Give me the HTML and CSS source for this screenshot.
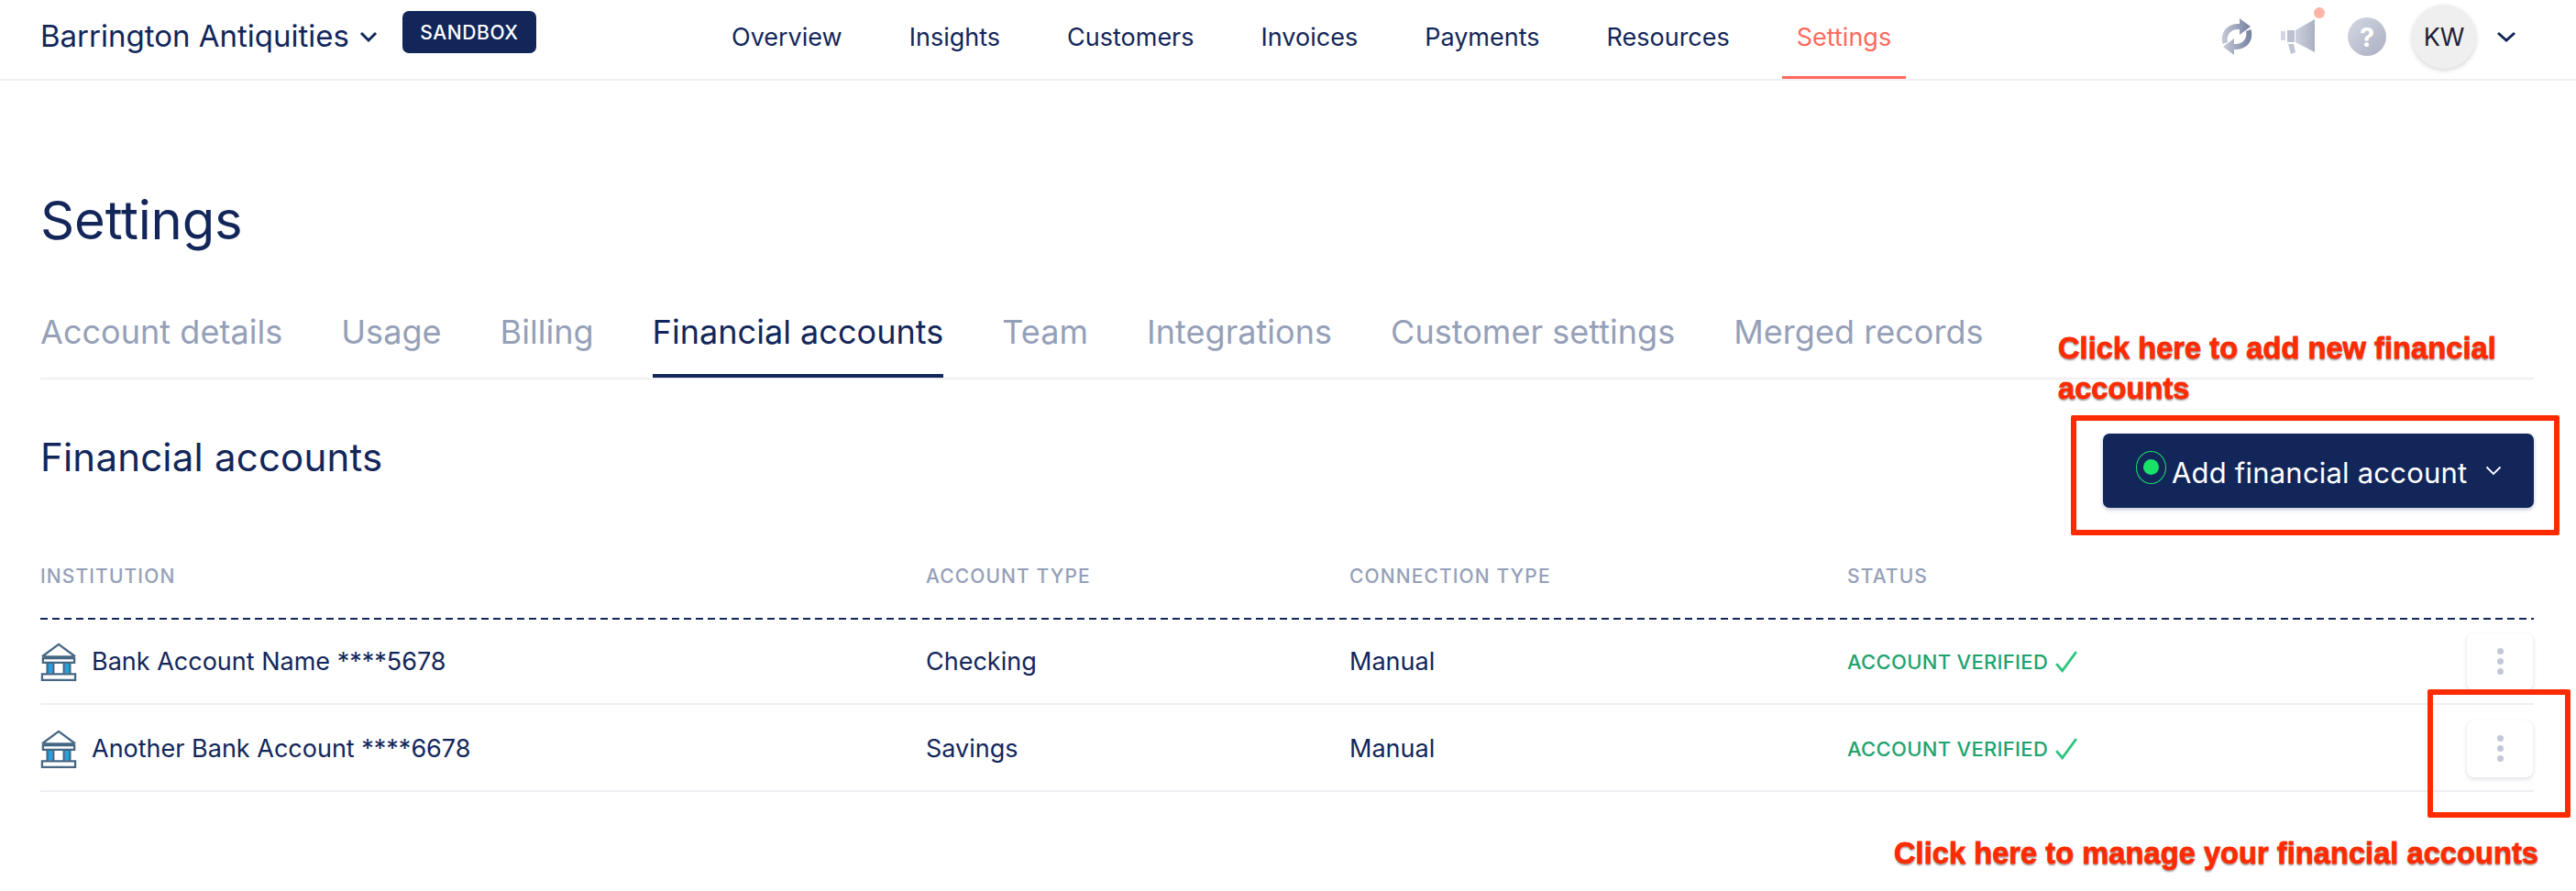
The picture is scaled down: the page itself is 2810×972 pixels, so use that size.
FILE: index.html
```html
<!DOCTYPE html>
<html lang="en">
<head>
<meta charset="utf-8">
<title>Settings</title>
<link rel="stylesheet" href="styles.css">
</head>
<body>
<header class="topbar">
  <div class="brand">
    <span class="brand-name">Barrington Antiquities</span>
    <svg class="brand-chev" viewBox="0 0 20 13"><path d="M2 2l8 8 8-8" fill="none" stroke="#12265a" stroke-width="3"/></svg>
    <span class="sandbox">SANDBOX</span>
  </div>
  <nav class="mainnav">
    <a class="nav-item">Overview</a>
    <a class="nav-item">Insights</a>
    <a class="nav-item">Customers</a>
    <a class="nav-item">Invoices</a>
    <a class="nav-item">Payments</a>
    <a class="nav-item">Resources</a>
    <a class="nav-item nav-active">Settings</a>
  </nav>
  <div class="tools">
    <svg class="tool-sync" viewBox="0 0 34 40">
      <defs><linearGradient id="g1" x1="0" y1="0" x2="1" y2="0"><stop offset="0" stop-color="#c6cbd8"/><stop offset="1" stop-color="#75809f"/></linearGradient></defs>
      <g fill="url(#g1)">
        <path d="M1.500 28C-2 15 7 5 20 6V0l12 9-12 9v-6c-9-1-15 6-13 14z"/>
        <path d="M32.500 12C36 25 27 35 14 34v6L2 31l12-9v6c9 1 15-6 13-14z"/>
      </g>
    </svg>
    <div class="megaphone">
      <svg class="tool-mega" viewBox="0 0 37 38">
        <defs><linearGradient id="g2" x1="0" y1="0" x2="1" y2="0"><stop offset="0" stop-color="#cdd1dc"/><stop offset="1" stop-color="#aab0c4"/></linearGradient></defs>
        <path d="M0 13h5v10H0z" fill="#d3d6e0"/>
        <path d="M7 12h8v13H7z" fill="#bcc1d1"/>
        <path d="M16 12 37 0v36L16 25z" fill="url(#g2)"/>
        <path d="M8 27h6l2 9-5 2z" fill="#c0c5d3"/>
      </svg>
      <span class="mega-dot"></span>
    </div>
    <div class="help">?</div>
    <div class="avatar">KW</div>
    <svg class="avatar-chev" viewBox="0 0 22 13"><path d="M2 2l9 8 9-8" fill="none" stroke="#12265a" stroke-width="3"/></svg>
  </div>
</header>

<main class="page">
  <h1 class="title">Settings</h1>
  <div class="tabs">
    <a class="tab">Account details</a>
    <a class="tab">Usage</a>
    <a class="tab">Billing</a>
    <a class="tab tab-active">Financial accounts</a>
    <a class="tab">Team</a>
    <a class="tab">Integrations</a>
    <a class="tab">Customer settings</a>
    <a class="tab">Merged records</a>
  </div>
  <div class="section-head">
    <h2 class="section-title">Financial accounts</h2>
    <button class="add-btn">
      <span class="live"><span class="live-dot"></span></span>
      <span>Add financial account</span>
      <svg class="add-chev" viewBox="0 0 18 11"><path d="M1.500 1.500 9 9l7.500-7.500" fill="none" stroke="#fff" stroke-width="1.800"/></svg>
    </button>
  </div>

  <div class="row row-head">
    <div class="c1">INSTITUTION</div><div class="c2">ACCOUNT TYPE</div><div class="c3">CONNECTION TYPE</div><div class="c4">STATUS</div><div class="c5"></div>
  </div>
  <div class="row row-body">
    <div class="c1 inst">
      <svg class="bank" viewBox="0 0 42 44"><use href="#bank-shape"/></svg>
      <span>Bank Account Name ****5678</span>
    </div>
    <div class="c2">Checking</div><div class="c3">Manual</div>
    <div class="c4 verified">ACCOUNT VERIFIED <svg class="check" viewBox="0 0 24 24"><path d="M2 14l6 7L22 2" fill="none" stroke="#2dc57f" stroke-width="2.600"/></svg></div>
    <div class="c5"><button class="kebab"><i></i><i></i><i></i></button></div>
  </div>
  <div class="row row-body row-last">
    <div class="c1 inst">
      <svg class="bank" viewBox="0 0 42 44">
        <g id="bank-shape">
          <path d="M8 22h6v13H8zM28 22h6v13h-6z" fill="#1ba6de"/>
          <path d="M2 16 21 2l19 14M4 16h34M3 18v5h36v-5zM8 23v12M15 23v12M27 23v12M34 23v12M2 36h38v7H2z" fill="none" stroke="#456784" stroke-width="2.400"/>
        </g>
      </svg>
      <span>Another Bank Account ****6678</span>
    </div>
    <div class="c2">Savings</div><div class="c3">Manual</div>
    <div class="c4 verified">ACCOUNT VERIFIED <svg class="check" viewBox="0 0 24 24"><path d="M2 14l6 7L22 2" fill="none" stroke="#2dc57f" stroke-width="2.600"/></svg></div>
    <div class="c5"><button class="kebab"><i></i><i></i><i></i></button></div>
  </div>
</main>

<div class="note note-add">Click here to add new financial accounts</div>
<div class="note note-manage">Click here to manage your financial accounts</div>
<div class="redbox redbox-add"></div>
<div class="redbox redbox-manage"></div>
</body>
</html>
```

FILE: styles.css
```css
* { box-sizing: border-box; }
html, body { margin: 0; height: 972px; overflow: hidden; background: #fff; }
body { position: relative; font-family: "Inter", "Liberation Sans", sans-serif; color: #12265a; }
h1, h2 { margin: 0; font-weight: 400; }

.topbar { display: flex; align-items: center; height: 88px; padding: 0 65px 6px 44px; border-bottom: 2px solid #efeff4; position: relative; }
.brand { display: flex; align-items: center; width: 754px; margin-top: -2px; }
.brand-name { font-size: 33px; }
.brand-chev { width: 20px; height: 13px; margin: 2px 0 0 11px; }
.sandbox { margin: -8px 0 0 27px; background: #12265a; color: #fff; border-radius: 7px; font-size: 21px; font-weight: 500; letter-spacing: .6px; width: 146px; height: 46px; display: flex; align-items: center; justify-content: center; }
.mainnav { display: flex; align-items: stretch; height: 86px; margin-bottom: -6px; gap: 73px; }
.nav-item { display: flex; align-items: center; font-size: 27px; padding-bottom: 6px; color: #12265a; }
.nav-active { color: #ff6a5c; border-bottom: 3px solid #ff6a5c; padding: 0 16px 3px; margin: 0 -16px; }

.tools { margin-left: auto; display: flex; align-items: center; }
.tool-sync { width: 34px; height: 40px; }
.megaphone { position: relative; margin-left: 31px; width: 37px; height: 38px; }
.tool-mega { width: 37px; height: 38px; display: block; }
.mega-dot { position: absolute; right: -11px; top: -13px; width: 12px; height: 12px; background: #ffb4a8; border-radius: 50%; }
.help { margin-left: 36px; width: 42px; height: 42px; border-radius: 50%; background: linear-gradient(135deg, #d5d8e2, #a9afc3); color: #fff; font-size: 29px; font-weight: 700; display: flex; align-items: center; justify-content: center; }
.avatar { margin-left: 28px; width: 70px; height: 70px; border-radius: 50%; background: #efefef; color: #231f33; font-size: 27px; display: flex; align-items: center; justify-content: center; box-shadow: 0 2px 5px rgba(0,0,0,.16); }
.avatar-chev { margin-left: 22px; width: 22px; height: 13px; }

.page { padding: 0 46px 0 44px; }
.title { font-size: 58px; line-height: 68px; margin-top: 118px; letter-spacing: -.2px; }
.tabs { display: flex; gap: 64px; margin-top: 48px; border-bottom: 2px solid #efeff4; height: 92px; }
.tab { font-size: 36px; letter-spacing: .04px; color: #95a0b8; line-height: 80px; height: 90px; }
.tab-active { color: #12265a; border-bottom: 4px solid #12265a; }

.section-head { display: flex; justify-content: space-between; align-items: flex-start; height: 172px; }
.section-title { font-size: 42px; margin-top: 58px; letter-spacing: .2px; line-height: 54px; }
.add-btn { margin-top: 59px; width: 470px; height: 81px; background: #12265a; color: #fff; border: 0; border-radius: 7px; font: 31px "Inter", sans-serif; letter-spacing: .2px; display: flex; align-items: center; padding: 3px 0 0 36px; box-shadow: 0 2px 4px rgba(18,38,90,.25); }
.live { width: 33px; height: 36px; border: 1px solid #19e26a; border-radius: 50%; display: flex; align-items: center; justify-content: center; margin-right: 6px; margin-top: -11px; }
.live-dot { width: 17px; height: 17px; background: #19e26a; border-radius: 50%; }
.add-chev { width: 18px; height: 11px; margin: -3px 0 0 20px; }

.row { display: flex; align-items: center; }
.c1 { width: 966px; } .c2 { width: 462px; } .c3 { width: 543px; } .c4 { width: 600px; } .c5 { flex: 1; display: flex; justify-content: flex-end; }
.row-head { height: 90px; font-size: 21px; font-weight: 500; letter-spacing: 1.1px; color: #95a0b8; padding-bottom: 6px; background: repeating-linear-gradient(90deg, #12265a 0 8px, transparent 8px 13px) left bottom / 100% 2px no-repeat; }
.row-body { height: 93px; font-size: 27px; border-bottom: 2px solid #efeff4; }
.row-last { height: 95px; padding-top: 2px; }
.inst { display: flex; align-items: center; gap: 16px; }
.bank { width: 40px; height: 42px; }
.verified { color: #1fa36f; font-size: 22px; font-weight: 500; letter-spacing: .3px; display: flex; align-items: center; gap: 7px; }
.check { width: 26px; height: 26px; }
.kebab { width: 72px; height: 62px; margin-right: 1px; border: 0; background: #fff; border-radius: 8px; box-shadow: 0 2px 5px rgba(18,38,90,.14); display: flex; flex-direction: column; align-items: center; justify-content: center; gap: 4px; }
.kebab i { width: 7px; height: 7px; border-radius: 50%; background: #c2c8d8; display: block; }

.note { position: absolute; color: #ff2b00; font: 700 32.7px "Liberation Sans", sans-serif; -webkit-text-stroke: .8px #ff2b00; text-shadow: 0 2px 2px rgba(0,0,0,.4), 0 0 3px #fff; }
.note-add { left: 2245px; top: 358px; width: 540px; line-height: 44px; }
.note-manage { left: 2066px; top: 911px; white-space: nowrap; line-height: 40px; }
.redbox { position: absolute; border: 6px solid #ff2b00; border-radius: 2px; }
.redbox-add { left: 2259px; top: 453px; width: 533px; height: 131px; }
.redbox-manage { left: 2648px; top: 752px; width: 156px; height: 140px; }
```
